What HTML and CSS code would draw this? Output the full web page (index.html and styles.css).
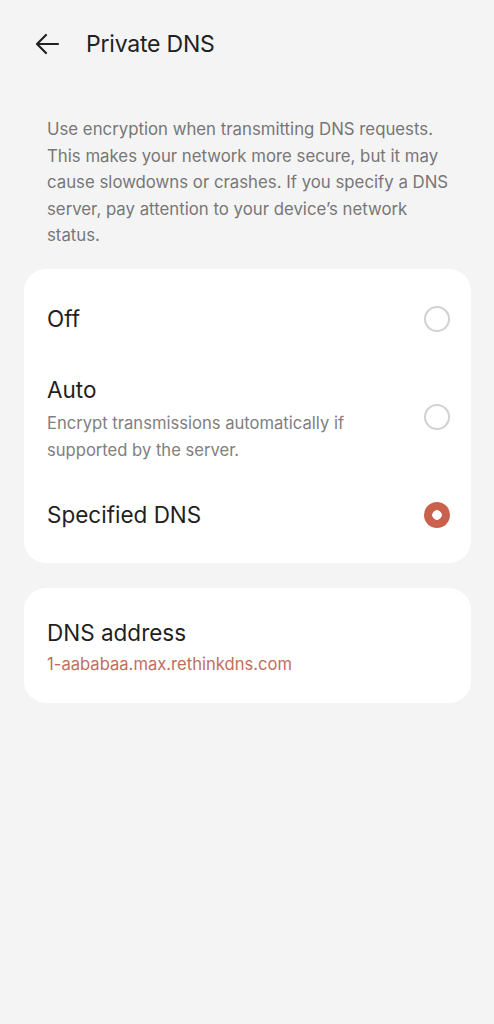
FILE: index.html
```html
<!DOCTYPE html>
<html lang="en">
<head>
<meta charset="utf-8">
<title>Private DNS</title>
<link rel="stylesheet" href="styles.css">
</head>
<body>
<div class="page">
  <header class="topbar">
    <svg class="back" width="28" height="28" viewBox="0 0 28 28" aria-hidden="true">
      <path d="M25 14H4M13 5L4 14L13 23" fill="none" stroke="#222" stroke-width="2.2" stroke-linecap="round" stroke-linejoin="round"/>
    </svg>
    <h1 class="title">Private DNS</h1>
  </header>

  <p class="desc">Use encryption when transmitting DNS requests. This makes your network more secure, but it may cause slowdowns or crashes. If you specify a DNS server, pay attention to your device’s network status.</p>

  <section class="card options">
    <div class="row row-single">
      <div class="text"><div class="label">Off</div></div>
      <span class="radio"></span>
    </div>
    <div class="row row-double">
      <div class="text">
        <div class="label">Auto</div>
        <div class="sub">Encrypt transmissions automatically if supported by the server.</div>
      </div>
      <span class="radio"></span>
    </div>
    <div class="row row-single">
      <div class="text"><div class="label">Specified DNS</div></div>
      <span class="radio checked"></span>
    </div>
  </section>

  <section class="card address">
    <div class="label">DNS address</div>
    <div class="value">1-aababaa.max.rethinkdns.com</div>
  </section>
</div>
</body>
</html>
```

FILE: styles.css
```css
html, body {
  margin: 0;
  padding: 0;
  background: #f4f4f4;
}
body {
  font-family: Inter, "Noto Sans", sans-serif;
  color: #1f1f1f;
  -webkit-font-smoothing: antialiased;
}
.page {
  width: 494px;
  min-height: 1024px;
  padding: 0 23px 0 24px;
  box-sizing: border-box;
}
.topbar {
  height: 88px;
  display: flex;
  align-items: center;
  gap: 25px;
  padding-left: 9px;
}
.back { flex: none; }
.title {
  margin: 0;
  font-size: 23px;
  font-weight: 400;
  color: #222;
  letter-spacing: -0.2px;
}
.desc {
  margin: 28px 0 20px;
  padding: 0 13px 0 23px;
  font-size: 16.8px;
  line-height: 26.5px;
  color: #777;
}
.card {
  background: #fff;
  border-radius: 22px;
}
.options {
  padding: 10px 0 8px;
}
.row {
  display: flex;
  align-items: center;
  justify-content: space-between;
  padding: 0 21px 0 23px;
}
.row-single { height: 80px; }
.row-double { height: 116px; }
.row-double .text { margin-top: 6px; }
.text { flex: 1; min-width: 0; padding-right: 60px; }
.label {
  font-size: 22.5px;
  line-height: 30px;
  color: #1f1f1f;
}
.sub {
  margin-top: 5px;
  font-size: 16.6px;
  line-height: 27px;
  color: #808080;
}
.radio {
  flex: none;
  width: 22px;
  height: 22px;
  border: 2px solid #d2d2d2;
  border-radius: 50%;
  box-sizing: content-box;
}
.radio.checked {
  width: 26px;
  height: 26px;
  border: none;
  background: radial-gradient(circle, #fff 0 4.5px, #c9614c 5px);
}
.address {
  margin-top: 25px;
  padding: 30px 23px 27px;
}
.address .value {
  margin-top: 4px;
  font-size: 16.6px;
  line-height: 24px;
  color: #c36d5d;
}
```
